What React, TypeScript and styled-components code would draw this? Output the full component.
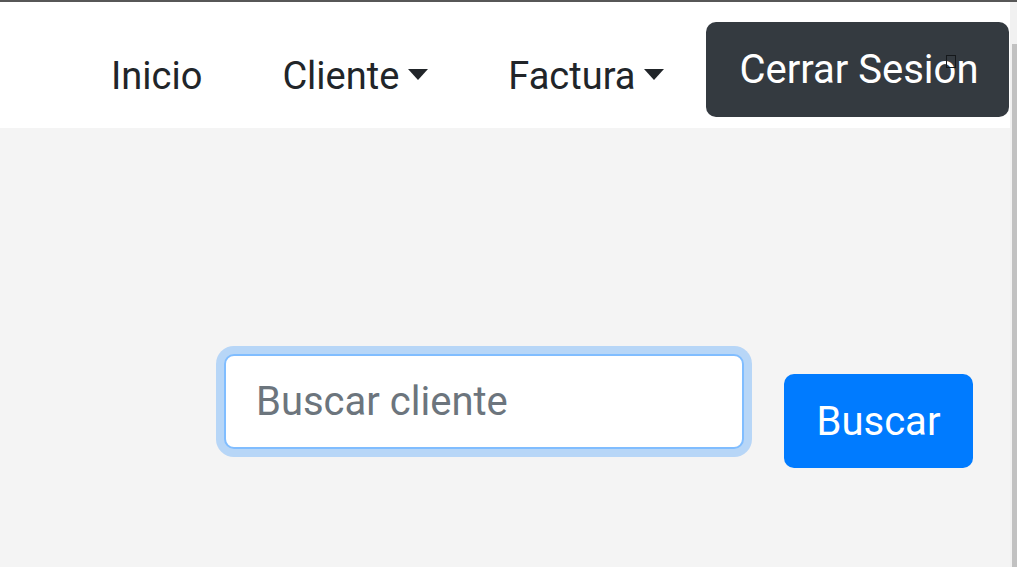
import styled, { createGlobalStyle } from "styled-components"

const GlobalStyle = createGlobalStyle`
  html, body {
    margin: 0;
    padding: 0;
    height: 100%;
    overflow: hidden;
  }
  body {
    font-family: Roboto, "Liberation Sans", sans-serif;
    background: #f4f4f4;
  }
`

function App() {
  return (
    <>
      <GlobalStyle />
      <Frame>
        <Page>
          <Navbar>
            <NavList>
              <NavLink>Inicio</NavLink>
              <NavLink $dropdown>Cliente</NavLink>
              <NavLink $dropdown>Factura</NavLink>
            </NavList>
            <LogoutButton>
              Cerrar Sesion
              <Glitch />
            </LogoutButton>
          </Navbar>
          <Main>
            <SearchInput placeholder="Buscar cliente" />
            <SearchButton>Buscar</SearchButton>
          </Main>
        </Page>
        <Scrollbar>
          <Thumb />
        </Scrollbar>
      </Frame>
    </>
  )
}

export default App

const Frame = styled.div`
  display: flex;
  height: 567px;
  border-top: 2px solid #575757;
  box-sizing: border-box;
`

const Page = styled.div`
  flex: 1;
  display: flex;
  flex-direction: column;
  background: #f4f4f4;
`

const Navbar = styled.nav`
  display: flex;
  align-items: flex-start;
  height: 126px;
  background: #ffffff;
  padding-left: 71px;
`

const NavList = styled.div`
  display: flex;
  padding-top: 46px;
`

const NavLink = styled.a<{ $dropdown?: boolean }>`
  display: flex;
  align-items: center;
  padding: 0 40px;
  font-size: 38px;
  line-height: 57px;
  color: #212529;
  cursor: pointer;

  ${({ $dropdown }) =>
    $dropdown &&
    `
    &::after {
      content: "";
      margin-left: 9px;
      margin-top: -4px;
      border-top: 11px solid #212529;
      border-left: 10px solid transparent;
      border-right: 10px solid transparent;
    }
  `}
`

const LogoutButton = styled.button`
  position: relative;
  margin-top: 20px;
  margin-left: 2px;
  height: 95px;
  padding: 0 31px 0 33px;
  font-family: Roboto, "Liberation Sans", sans-serif;
  font-size: 40px;
  color: #ffffff;
  background: #343a40;
  border: none;
  border-radius: 10px;
  white-space: nowrap;
`

const Glitch = styled.span`
  position: absolute;
  left: 240px;
  top: 33px;
  width: 8px;
  height: 11px;
  border: 1px solid #15181b;
`

const Main = styled.main`
  display: flex;
  align-items: flex-start;
  gap: 40px;
  padding: 226px 0 0 224px;
`

const SearchInput = styled.input`
  width: 520px;
  height: 95px;
  box-sizing: border-box;
  padding: 0 30px;
  font-family: Roboto, "Liberation Sans", sans-serif;
  font-size: 40px;
  color: #495057;
  background: #ffffff;
  border: 2px solid #80bdff;
  border-radius: 10px;
  box-shadow: 0 0 0 8px rgba(0, 123, 255, 0.25);
  outline: none;

  &::placeholder {
    color: #6c757d;
  }
`

const SearchButton = styled.button`
  margin-top: 20px;
  width: 189px;
  height: 94px;
  font-family: Roboto, "Liberation Sans", sans-serif;
  font-size: 40px;
  color: #ffffff;
  background: #007bff;
  border: none;
  border-radius: 10px;
`

const Scrollbar = styled.div`
  width: 7px;
  background: #f1f1f1;
  display: flex;
  flex-direction: column;
  padding-top: 42px;
  align-items: flex-end;
`

const Thumb = styled.div`
  width: 5px;
  flex: 1;
  background: #c1c1c1;
`
